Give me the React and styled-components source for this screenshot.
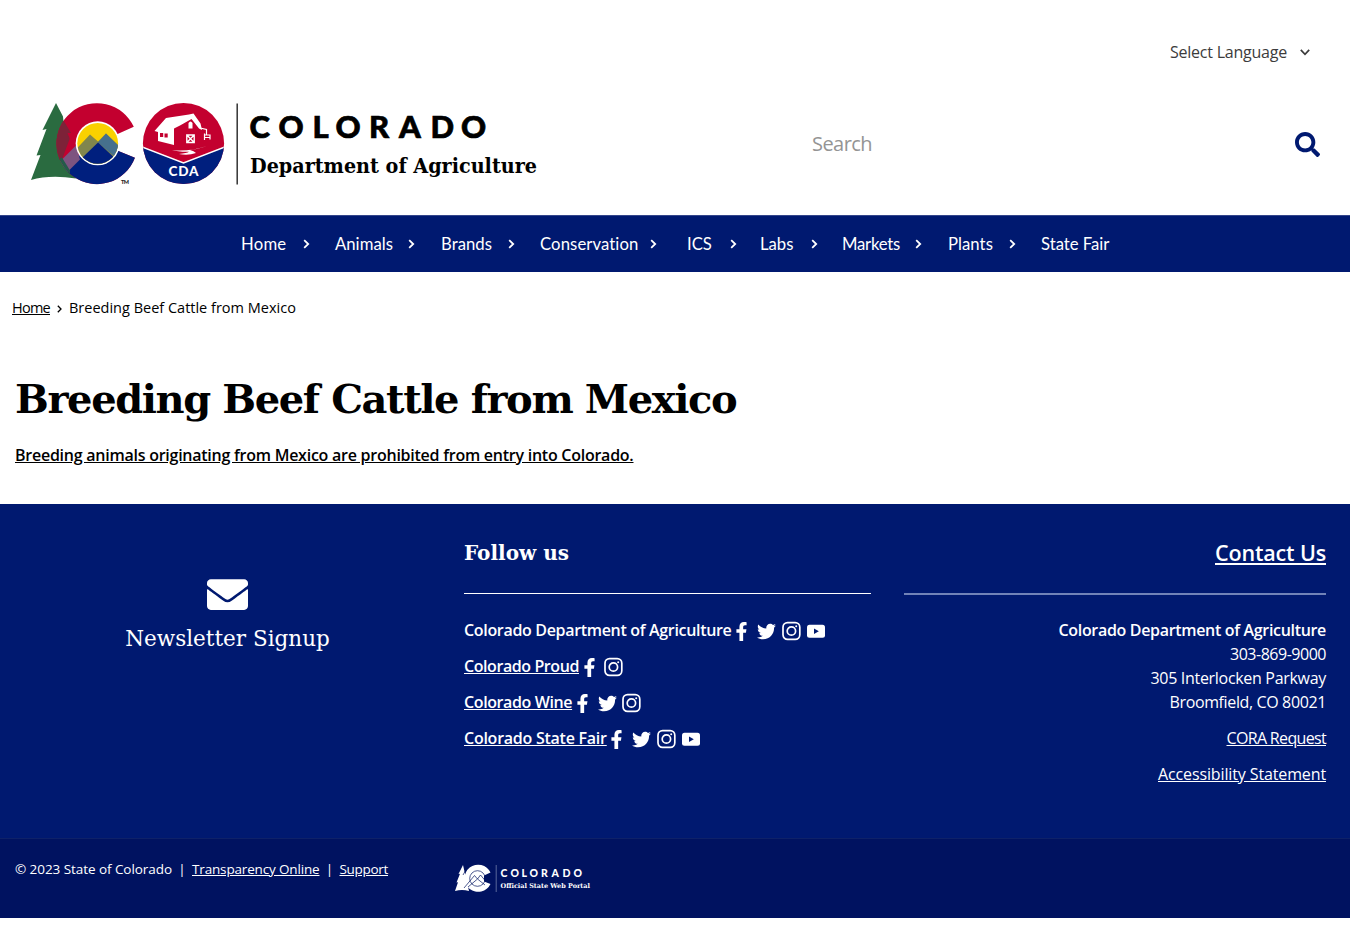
import React from "react";
import styled, { createGlobalStyle } from "styled-components";
import { FaEnvelope, FaSearch, FaFacebookF, FaTwitter } from "react-icons/fa";

const sans = `"Open Sans", "Noto Sans", sans-serif`;
const slab = `"DejaVu Serif", serif`;

const GlobalStyle = createGlobalStyle`
  * { box-sizing: border-box; }
  body { margin: 0; background: #fff; color: #000; font: 16px/24px ${sans}; }
  h1, h2, p { margin: 0; }
  a { color: inherit; }
  ul { margin: 0; padding: 0; list-style: none; }
  svg { display: block; }
`;

const Page = styled.div`
  display: flex;
  flex-direction: column;
`;

const Header = styled.header`
  height: 215px;
  padding: 40px 30px 0 31px;
`;

const LanguageBar = styled.div`
  display: flex;
  justify-content: flex-end;
  align-items: center;
  gap: 13px;
  height: 24px;
  padding-right: 10px;
  color: #3c3c3c;
`;

const Label = styled.span`
  letter-spacing: ${(p) => p.$track || 0}px;
`;

const Brand = styled.div`
  display: flex;
  align-items: center;
  height: 82px;
  margin-top: 39px;
`;

const LogoMark = styled.svg`
  flex: none;
  overflow: visible;
`;

const SearchBar = styled.div`
  display: flex;
  flex: 1;
  justify-content: space-between;
  align-items: center;
  margin-left: 264px;
  color: #949494;
  font-size: 20px;
`;

const SearchIcon = styled(FaSearch)`
  width: 25px;
  height: 25px;
  color: #001970;
`;

const Nav = styled.nav`
  display: flex;
  align-items: center;
  height: 57px;
  padding-left: 241px;
  background: #001970;
  border-top: 1px solid #33458a;
  color: #fff;
  font: 16.7px/24px Lato, sans-serif;
`;

const NavItem = styled.div`
  display: flex;
  flex: none;
  justify-content: space-between;
  align-items: center;
  width: ${(p) => p.$width}px;
  padding-right: ${(p) => p.$gap}px;
`;

const Breadcrumb = styled.div`
  display: flex;
  align-items: center;
  height: 24px;
  margin: 24px 0 0 12px;
  font-size: 14.5px;
`;

const CrumbArrow = styled.svg`
  margin: 1px 7px 0;
`;

const Main = styled.main`
  height: 184px;
  padding: 50px 15px 0;
`;

const Title = styled.h1`
  font: bold 40px/58px ${slab};
  letter-spacing: ${(p) => p.$track || 0}px;
  white-space: nowrap;
`;

const Notice = styled.p`
  margin-top: 15px;
  font-weight: 600;
  text-decoration: underline;
`;

const Footer = styled.footer`
  display: flex;
  height: 334px;
  background: #001970;
  color: #fff;
`;

const Newsletter = styled.div`
  display: flex;
  flex-direction: column;
  align-items: center;
  width: 455px;
  padding-top: 70px;
  font: 21.5px/32px ${slab};
`;

const Envelope = styled(FaEnvelope)`
  width: 41px;
  height: 41px;
  margin-bottom: 8px;
`;

const Follow = styled.div`
  width: 407px;
  margin-left: 9px;
`;

const Contact = styled.div`
  width: 422px;
  margin-left: 33px;
  text-align: right;
`;

const ColumnTitle = styled.h2`
  height: 90px;
  padding-top: 33px;
  margin-bottom: 24px;
  border-bottom: 1px solid #fff;
  font: bold 20px/32px ${slab};
`;

const ContactTitle = styled(ColumnTitle)`
  height: 91px;
  margin-bottom: 23px;
  border-bottom: 2px solid #7183b8;
  font: 600 21.5px/32px ${sans};
`;

const SocialRow = styled.li`
  display: flex;
  align-items: center;
  height: 24px;
  margin-bottom: 12px;
  font-weight: 600;
`;

const SocialIcons = styled.span`
  display: flex;
  gap: 5px;
  padding-top: 2px;
`;

const IconCell = styled.span`
  display: flex;
  justify-content: center;
  align-items: center;
  width: 20px;
  height: 20px;
`;

const ContactLine = styled.p`
  font-weight: ${(p) => (p.$strong ? 600 : 400)};
  margin-top: ${(p) => (p.$spaced ? 12 : 0)}px;
`;

const Legal = styled.div`
  display: flex;
  align-items: flex-start;
  height: 80px;
  padding-left: 15px;
  background: #001260;
  border-top: 1px solid #0e2168;
  color: #fff;
  font-size: 13.5px;
`;

const LegalText = styled.div`
  display: flex;
  width: 440px;
  padding-top: 18px;
`;

const Divider = styled.span`
  width: 20px;
  text-align: center;
`;

const PortalMark = styled.svg`
  margin-top: 25px;
`;

const Chevron = () => (
  <svg width="7" height="10" viewBox="0 0 7 10" fill="none" stroke="#fff" strokeWidth="1.8">
    <path d="M1.2 1.2 5.2 5 1.2 8.8" />
  </svg>
);

const Facebook = () => <FaFacebookF size={19} />;
const Twitter = () => <FaTwitter size={19} />;

const Instagram = () => (
  <svg width="20" height="20" viewBox="0 0 20 20" fill="none" stroke="#fff" strokeWidth="1.7">
    <rect x="1" y="1.6" width="16.8" height="16.8" rx="4.6" />
    <circle cx="9.4" cy="10" r="4.2" />
    <circle cx="14.2" cy="5.2" r="1" fill="#fff" stroke="none" />
  </svg>
);

const Youtube = () => (
  <svg width="20" height="20" viewBox="0 0 20 20">
    <rect x="0" y="3.8" width="18" height="13" rx="2.5" fill="#fff" />
    <path d="M7 7.4v5.600l4.800-2.800z" fill="#001970" />
  </svg>
);

const icons = { facebook: Facebook, twitter: Twitter, instagram: Instagram, youtube: Youtube };

const StateLogo = () => (
  <LogoMark width="517" height="84" viewBox="31 102.5 517 84">
    <defs>
      <clipPath id="ring"><path d="M116.5 135 133.8 127.3A40.5 40.5 0 1 0 134.9 158.3L116.5 150.7Z" /></clipPath>
      <clipPath id="sun"><circle cx="97.7" cy="143.8" r="20.4" /></clipPath>
      <clipPath id="seal"><circle cx="183.5" cy="144" r="40.6" /></clipPath>
      <clipPath id="tree"><path d="M56 103.5 63 117 61.5 117.5 71 133.5 67.5 133.5 78 160 71 166 71 179H31Z" /></clipPath>
    </defs>
    <path d="M56 103.5 42.5 130.5 46.5 129.5 36.5 156 40.5 155.5 31 180.5Q50 175 76 179L66 150 63 117Z" fill="#2a6b40" />
    <g clipPath="url(#ring)">
      <rect x="50" y="100" width="90" height="90" fill="#c3002f" />
      <path d="M50 181 75 158 98 143 120 147 140 160V190H50Z" fill="#001f7e" />
      <path d="M50 172 76 146 80 160 67 173 58 182Z" fill="#7d5480" />
      <g clipPath="url(#tree)">
        <path d="M54 103 72 133 62 160 50 172Z" fill="#7d2238" />
        <path d="M54 162 62 158 70 171V180H50Z" fill="#245b4a" />
      </g>
    </g>
    <circle cx="97.7" cy="143.8" r="22" fill="#fff" />
    <g clipPath="url(#sun)">
      <rect x="75" y="120" width="46" height="46" fill="#f9d100" />
      <path d="M72 154 90 135 98 142 106 134 124 151V170H72Z" fill="#80864d" />
      <path d="M98 143 106 134 124 152V165Z" fill="#46708d" />
      <path d="M72 168 98 143 124 167V170H72Z" fill="#001f7e" />
    </g>
    <g clipPath="url(#seal)">
      <rect x="142" y="103" width="84" height="84" fill="#c3002f" />
      <path d="M142 147.5 183.5 163.5 225 147.5V187H142Z" fill="#001f7e" />
      <path d="M142 147.5 183.5 163.5 225 147.5" fill="none" stroke="#fff" strokeWidth="1.6" />
      <path d="M154.5 131.5 166 118.5 189 115 193.5 114 200.5 124 202 130.5 199 129 191.5 119.5 180 126 174 129V145.5L158 141.5 158 132.5Z" fill="#fff" />
      <path d="M160 133.5h3.2v4h-3.2zM164.5 134h3.2v4h-3.2z" fill="#c3002f" />
      <path d="M188.5 123.5q2-3 4 0v5.5h-4z" fill="#fff" />
      <path d="M186.8 135.5h7.4v7.5h-7.4zM186.8 135.5l7.4 7.5M194.2 135.5l-7.4 7.5" fill="none" stroke="#fff" strokeWidth="1.4" />
      <path d="M200 128.5 206.5 130V135.5M204.5 134V140.5M204.5 135.5H210V140M204.5 138H210" fill="none" stroke="#fff" strokeWidth="1.2" />
      <path d="M172 150.500Q188 152.500 207 146.500 197 150 190 150.500 194 151.500 196 153.500 188 156.500 179 154.500 187 153.800 189 152.300 178 152.500 172 150.500Z" fill="#fff" />
    </g>
    <text x="168.5" y="176" textLength="30" fill="#fff" fontFamily="Lato" fontWeight="900" fontSize="13.5">CDA</text>
    <text x="121" y="184" textLength="8" fill="#222" fontFamily="Lato" fontWeight="900" fontSize="5.5">TM</text>
    <path d="M237.2 104V185" stroke="#333" strokeWidth="1.5" />
    <text x="249.5 278.5 312.5 335.5 369 399 430.5 461" y="138.8" stroke="#000" strokeWidth=".7" fontFamily="Lato" fontWeight="900" fontSize="31">COLORADO</text>
    <text x="250" y="173" textLength="287" lengthAdjust="spacingAndGlyphs" fontFamily="DejaVu Serif" fontWeight="bold" fontSize="20.5">Department of Agriculture</text>
  </LogoMark>
);

const PortalLogo = () => (
  <PortalMark width="136" height="30" viewBox="455 864 136 30">
    <path d="M463 865 458.5 874 460 873.7 456.5 882.5 458 882.3 455 891Q462 889 469 891Z" fill="#fff" />
    <path d="M484 875.5 490.5 872.5A13.6 13.6 0 1 0 490.5 884L484 881.5Z" fill="#fff" />
    <g fill="none" stroke="#001260" strokeWidth=".7">
      <circle cx="477.5" cy="878.5" r="7.8" />
      <path d="M464 888 474.5 875.5 477.5 879 480.5 875 485.5 881M468 887 477.5 879 485 885M463 875Q466 868 470 866" />
    </g>
    <path d="M496.2 865V892" stroke="#7f8bb5" strokeWidth=".7" />
    <text x="500.5 510.5 521.5 529.5 541 551.5 562.5 573.5" y="876.5" fill="#fff" fontFamily="Lato" fontWeight="900" fontSize="10.5">COLORADO</text>
    <text x="500.5" y="888.3" textLength="89.5" lengthAdjust="spacingAndGlyphs" fill="#fff" fontFamily="DejaVu Serif" fontWeight="bold" fontSize="6.5">Official State Web Portal</text>
  </PortalMark>
);

const navItems = [
  { name: "Home", width: 94, gap: 25.5, track: 0.23 },
  { name: "Animals", width: 106, gap: 26.5, track: 0.02 },
  { name: "Brands", width: 99, gap: 25.5, track: 0.04 },
  { name: "Conservation", width: 147, gap: 30.5, track: 0.1 },
  { name: "ICS", width: 73, gap: 23, track: 0.02 },
  { name: "Labs", width: 82, gap: 24.5, track: 0 },
  { name: "Markets", width: 106, gap: 26.5, track: -0.23 },
  { name: "Plants", width: 93, gap: 25, track: 0.05 },
  { name: "State Fair", width: 80, gap: 0, track: -0.01 },
];

const social = [
  { name: "Colorado Department of Agriculture", track: -0.323, icons: ["facebook", "twitter", "instagram", "youtube"] },
  { name: "Colorado Proud", link: true, track: -0.417, icons: ["facebook", "instagram"] },
  { name: "Colorado Wine", link: true, track: -0.39, icons: ["facebook", "twitter", "instagram"] },
  { name: "Colorado State Fair", link: true, track: -0.25, icons: ["facebook", "twitter", "instagram", "youtube"] },
];

export default function App() {
  return (
    <Page>
      <GlobalStyle />
      <Header>
        <LanguageBar>
          <Label $track={-0.228}>Select Language</Label>
          <svg width="10" height="8" viewBox="0 0 10 8" fill="none" stroke="#3c3c3c" strokeWidth="1.7">
            <path d="M.8 1.8 5 6.3 9.2 1.8" />
          </svg>
        </LanguageBar>
        <Brand>
          <StateLogo />
          <SearchBar>
            <Label $track={-0.557}>Search</Label>
            <SearchIcon />
          </SearchBar>
        </Brand>
      </Header>
      <Nav>
        {navItems.map((item, i) => (
          <NavItem key={item.name} $width={item.width} $gap={item.gap}>
            <Label $track={item.track}>{item.name}</Label>
            {i < navItems.length - 1 && <Chevron />}
          </NavItem>
        ))}
      </Nav>
      <Breadcrumb>
        <a href="#"><Label $track={-0.746}>Home</Label></a>
        <CrumbArrow width="5" height="8" viewBox="0 0 5 8" fill="none" stroke="#000" strokeWidth="1.3">
          <path d="M.8.8 4 4 .8 7.2" />
        </CrumbArrow>
        <Label>Breeding Beef Cattle from Mexico</Label>
      </Breadcrumb>
      <Main>
        <Title $track={-1.4}>Breeding Beef Cattle from Mexico</Title>
        <Notice>
          <Label $track={-0.249}>Breeding animals originating from Mexico are prohibited from entry into Colorado.</Label>
        </Notice>
      </Main>
      <Footer>
        <Newsletter>
          <Envelope />
          <Label>Newsletter Signup</Label>
        </Newsletter>
        <Follow>
          <ColumnTitle>Follow us</ColumnTitle>
          <ul>
            {social.map((row) => (
              <SocialRow key={row.name}>
                {row.link ? (
                  <a href="#"><Label $track={row.track}>{row.name}</Label></a>
                ) : (
                  <Label $track={row.track}>{row.name}</Label>
                )}
                <SocialIcons>
                  {row.icons.map((name) => {
                    const Icon = icons[name];
                    return <IconCell key={name}><Icon /></IconCell>;
                  })}
                </SocialIcons>
              </SocialRow>
            ))}
          </ul>
        </Follow>
        <Contact>
          <ContactTitle><a href="#"><Label $track={-0.159}>Contact Us</Label></a></ContactTitle>
          <ContactLine $strong><Label $track={-0.323}>Colorado Department of Agriculture</Label></ContactLine>
          <ContactLine><Label $track={-0.482}>303-869-9000</Label></ContactLine>
          <ContactLine><Label $track={-0.307}>305 Interlocken Parkway</Label></ContactLine>
          <ContactLine><Label $track={-0.37}>Broomfield, CO 80021</Label></ContactLine>
          <ContactLine $spaced><a href="#"><Label $track={-0.663}>CORA Request</Label></a></ContactLine>
          <ContactLine $spaced><a href="#"><Label $track={-0.125}>Accessibility Statement</Label></a></ContactLine>
        </Contact>
      </Footer>
      <Legal>
        <LegalText>
          <Label $track={-0.061}>© 2023 State of Colorado</Label>
          <Divider>|</Divider>
          <a href="#"><Label $track={-0.158}>Transparency Online</Label></a>
          <Divider>|</Divider>
          <a href="#"><Label $track={-0.308}>Support</Label></a>
        </LegalText>
        <PortalLogo />
      </Legal>
    </Page>
  );
}
